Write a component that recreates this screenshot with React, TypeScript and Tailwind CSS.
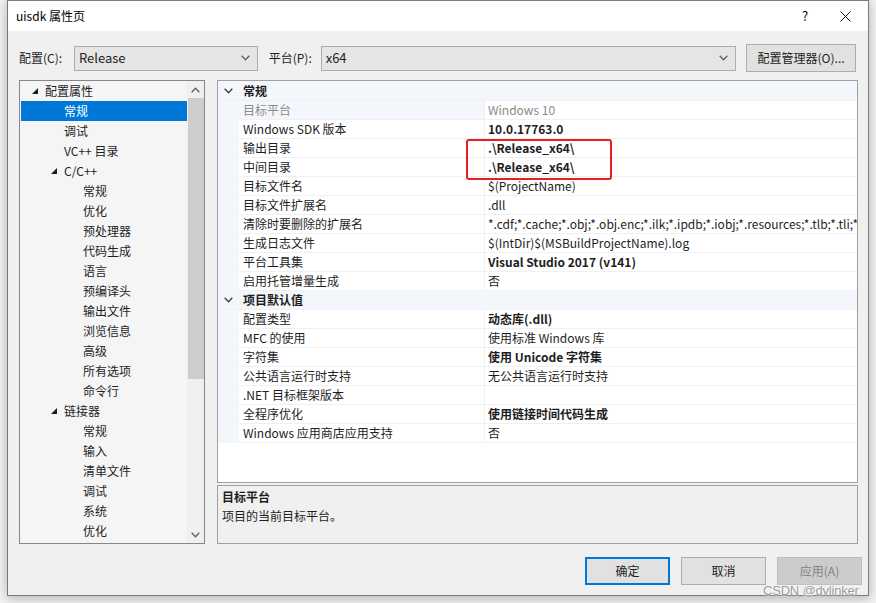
import React from "react";

type TreeItem = { t: string; lvl: number; exp?: boolean; sel?: boolean };

const tree: TreeItem[] = [
  { t: "配置属性", lvl: 0, exp: true },
  { t: "常规", lvl: 1, sel: true },
  { t: "调试", lvl: 1 },
  { t: "VC++ 目录", lvl: 1 },
  { t: "C/C++", lvl: 1, exp: true },
  { t: "常规", lvl: 2 },
  { t: "优化", lvl: 2 },
  { t: "预处理器", lvl: 2 },
  { t: "代码生成", lvl: 2 },
  { t: "语言", lvl: 2 },
  { t: "预编译头", lvl: 2 },
  { t: "输出文件", lvl: 2 },
  { t: "浏览信息", lvl: 2 },
  { t: "高级", lvl: 2 },
  { t: "所有选项", lvl: 2 },
  { t: "命令行", lvl: 2 },
  { t: "链接器", lvl: 1, exp: true },
  { t: "常规", lvl: 2 },
  { t: "输入", lvl: 2 },
  { t: "清单文件", lvl: 2 },
  { t: "调试", lvl: 2 },
  { t: "系统", lvl: 2 },
  { t: "优化", lvl: 2 },
];

type Row = { name: string; value: string; bold?: boolean; disabled?: boolean };
type Section = { title: string; rows: Row[] };

const sections: Section[] = [
  {
    title: "常规",
    rows: [
      { name: "目标平台", value: "Windows 10", disabled: true },
      { name: "Windows SDK 版本", value: "10.0.17763.0", bold: true },
      { name: "输出目录", value: ".\\Release_x64\\", bold: true },
      { name: "中间目录", value: ".\\Release_x64\\", bold: true },
      { name: "目标文件名", value: "$(ProjectName)" },
      { name: "目标文件扩展名", value: ".dll" },
      {
        name: "清除时要删除的扩展名",
        value:
          "*.cdf;*.cache;*.obj;*.obj.enc;*.ilk;*.ipdb;*.iobj;*.resources;*.tlb;*.tli;*.tlh;*.tmp;*.rsp;*.pgc;*.pgd;*.meta",
      },
      { name: "生成日志文件", value: "$(IntDir)$(MSBuildProjectName).log" },
      { name: "平台工具集", value: "Visual Studio 2017 (v141)", bold: true },
      { name: "启用托管增量生成", value: "否" },
    ],
  },
  {
    title: "项目默认值",
    rows: [
      { name: "配置类型", value: "动态库(.dll)", bold: true },
      { name: "MFC 的使用", value: "使用标准 Windows 库" },
      { name: "字符集", value: "使用 Unicode 字符集", bold: true },
      { name: "公共语言运行时支持", value: "无公共语言运行时支持" },
      { name: ".NET 目标框架版本", value: "" },
      { name: "全程序优化", value: "使用链接时间代码生成", bold: true },
      { name: "Windows 应用商店应用支持", value: "否" },
    ],
  },
];

function Chevron({ up = false, className = "" }: { up?: boolean; className?: string }) {
  return (
    <svg width="9" height="6" viewBox="0 0 9 6" className={className}>
      <path
        d={up ? "M0.7 5.2 L4.5 1.2 L8.3 5.2" : "M0.7 0.8 L4.5 4.8 L8.3 0.8"}
        fill="none"
        stroke="currentColor"
        strokeWidth="1.3"
      />
    </svg>
  );
}

function Tri() {
  return (
    <svg width="6" height="6" viewBox="0 0 6 6">
      <path d="M6 0 L6 6 L0 6 Z" fill="#1e1e1e" />
    </svg>
  );
}

function Select({ value, w }: { value: string; w: string }) {
  return (
    <div
      className={`${w} h-[25px] bg-[#e5e5e5] border border-[#adadad] flex items-center pl-[4px] pr-[7px]`}
    >
      <span className="flex-1 text-[13px] text-[#1e1e1e]">{value}</span>
      <Chevron className="text-[#606060]" />
    </div>
  );
}

export default function App() {
  return (
    <div className="w-[876px] h-[603px] bg-[#f2f2f2] pl-[7px] font-['Noto_Sans_CJK_SC','Noto_Sans',sans-serif] text-[12px] text-[#1e1e1e] relative overflow-hidden">
      <div className="w-[862px] h-[596px] border border-[#7a7a7a] bg-[#f0f0f0] shadow-[0_2px_10px_rgba(0,0,0,0.28)] flex flex-col">
        {/* Title bar */}
        <div className="h-[30px] bg-white flex items-center pl-[8px] shrink-0">
          <span className="flex-1 text-[12px] text-black">uisdk 属性页</span>
          <span className="w-[20px] text-center text-[13px] text-black mr-[25px]">?</span>
          <svg width="11" height="11" viewBox="0 0 11 11" className="mr-[17px]">
            <path d="M0.5 0.5 L10.5 10.5 M10.5 0.5 L0.5 10.5" stroke="#111" strokeWidth="1" />
          </svg>
        </div>

        {/* Body */}
        <div className="flex-1 flex flex-col pl-[11px] pr-[6px] pb-[10px]">
          {/* Config row */}
          <div className="mt-[13px] h-[28px] flex items-center pr-[6px]">
            <span className="w-[55px] text-[12px]">配置(C):</span>
            <Select value="Release" w="w-[184px]" />
            <span className="ml-[11px] w-[52px] text-[12px]">平台(P):</span>
            <Select value="x64" w="w-[416px]" />
            <div className="ml-[10px] w-[110px] h-[28px] bg-[#e1e1e1] border border-[#adadad] flex items-center justify-center text-[12px]">
              配置管理器(O)...
            </div>
          </div>

          {/* Main area */}
          <div className="mt-[8px] h-[464px] flex gap-[12px] pr-[4px]">
            {/* Tree */}
            <div className="w-[186px] h-[464px] border border-[#828790] bg-[#f5f5f5] flex">
              <div className="flex-1 pl-[1px] overflow-hidden">
                {tree.map((it, i) => {
                  const textX = 25 + it.lvl * 19;
                  return (
                    <div
                      key={i}
                      className={`h-[20px] relative flex items-center ${it.sel ? "bg-[#0078d7] text-white" : ""}`}
                    >
                      {it.exp && (
                        <span className="absolute top-[7px]" style={{ left: textX - 14 }}>
                          <Tri />
                        </span>
                      )}
                      <span className="whitespace-nowrap" style={{ paddingLeft: textX - 1 }}>
                        {it.t}
                      </span>
                    </div>
                  );
                })}
              </div>
              <div className="w-[17px] bg-[#f0f0f0] flex flex-col items-center">
                <div className="h-[17px] flex items-center justify-center text-[#606060]">
                  <Chevron up />
                </div>
                <div className="w-[16px] h-[281px] bg-[#cdcdcd]" />
                <div className="flex-1" />
                <div className="h-[17px] flex items-center justify-center text-[#606060]">
                  <Chevron />
                </div>
              </div>
            </div>

            {/* Right column */}
            <div className="w-[641px] flex flex-col gap-[2px]">
              {/* Property grid */}
              <div className="h-[403px] border border-[#a0a0a0] bg-white relative overflow-hidden">
                <div className="h-[1px] bg-[#f3f6fa]" />
                {sections.map((s, si) => (
                  <div key={si}>
                    <div className="h-[19px] flex items-center bg-[#f3f6fa] border-b border-[#eef0f3]">
                      <div className="w-[21px] flex justify-center text-[#3c3c3c]">
                        <Chevron />
                      </div>
                      <span className="pl-[4px] font-bold text-[12px]">{s.title}</span>
                    </div>
                    {s.rows.map((r, ri) => (
                      <div key={ri} className="h-[19px] flex items-stretch">
                        <div className="w-[21px] bg-[#f3f6fa]" />
                        <div
                          className={`w-[246px] pl-[4px] flex items-center border-b border-r border-[#eef0f3] whitespace-nowrap ${
                            r.disabled ? "bg-[#f3f6fa] text-[#8a8a8a]" : ""
                          }`}
                        >
                          {r.name}
                        </div>
                        <div
                          className={`flex-1 min-w-0 pl-[3px] flex items-center border-b border-[#eef0f3] whitespace-nowrap overflow-hidden ${
                            r.bold ? "font-bold" : ""
                          } ${r.disabled ? "text-[#8a8a8a]" : ""}`}
                        >
                          {r.value}
                        </div>
                      </div>
                    ))}
                  </div>
                ))}
                {/* red highlight box */}
                <div className="absolute left-[248px] top-[58px] w-[146px] h-[41px] border-[2.5px] border-[#e8201c] rounded-[3px]" />
              </div>
              {/* Description */}
              <div className="h-[59px] border border-[#a0a0a0] bg-[#f0f0f0] pl-[4px] pt-[1px]">
                <div className="font-bold leading-[19px]">目标平台</div>
                <div className="leading-[19px]">项目的当前目标平台。</div>
              </div>
            </div>
          </div>

          {/* Buttons */}
          <div className="mt-[13px] h-[28px] flex justify-end gap-[11px]">
            <div className="w-[85px] h-[28px] bg-[#e1e1e1] border-2 border-[#0078d7] flex items-center justify-center">
              确定
            </div>
            <div className="w-[85px] h-[28px] bg-[#e1e1e1] border border-[#adadad] flex items-center justify-center">
              取消
            </div>
            <div className="w-[85px] h-[28px] bg-[#cccccc] border border-[#bfbfbf] flex items-center justify-center text-[#838383]">
              应用(A)
            </div>
          </div>
        </div>
      </div>

      {/* watermark */}
      <div className="absolute left-[763px] top-[581px] text-[13px] tracking-[-0.2px] text-[#9a9a9a] font-['Liberation_Sans',sans-serif] [text-shadow:0_0_2px_#fff,0_0_2px_#fff]">
        CSDN @dvlinker
      </div>
    </div>
  );
}
